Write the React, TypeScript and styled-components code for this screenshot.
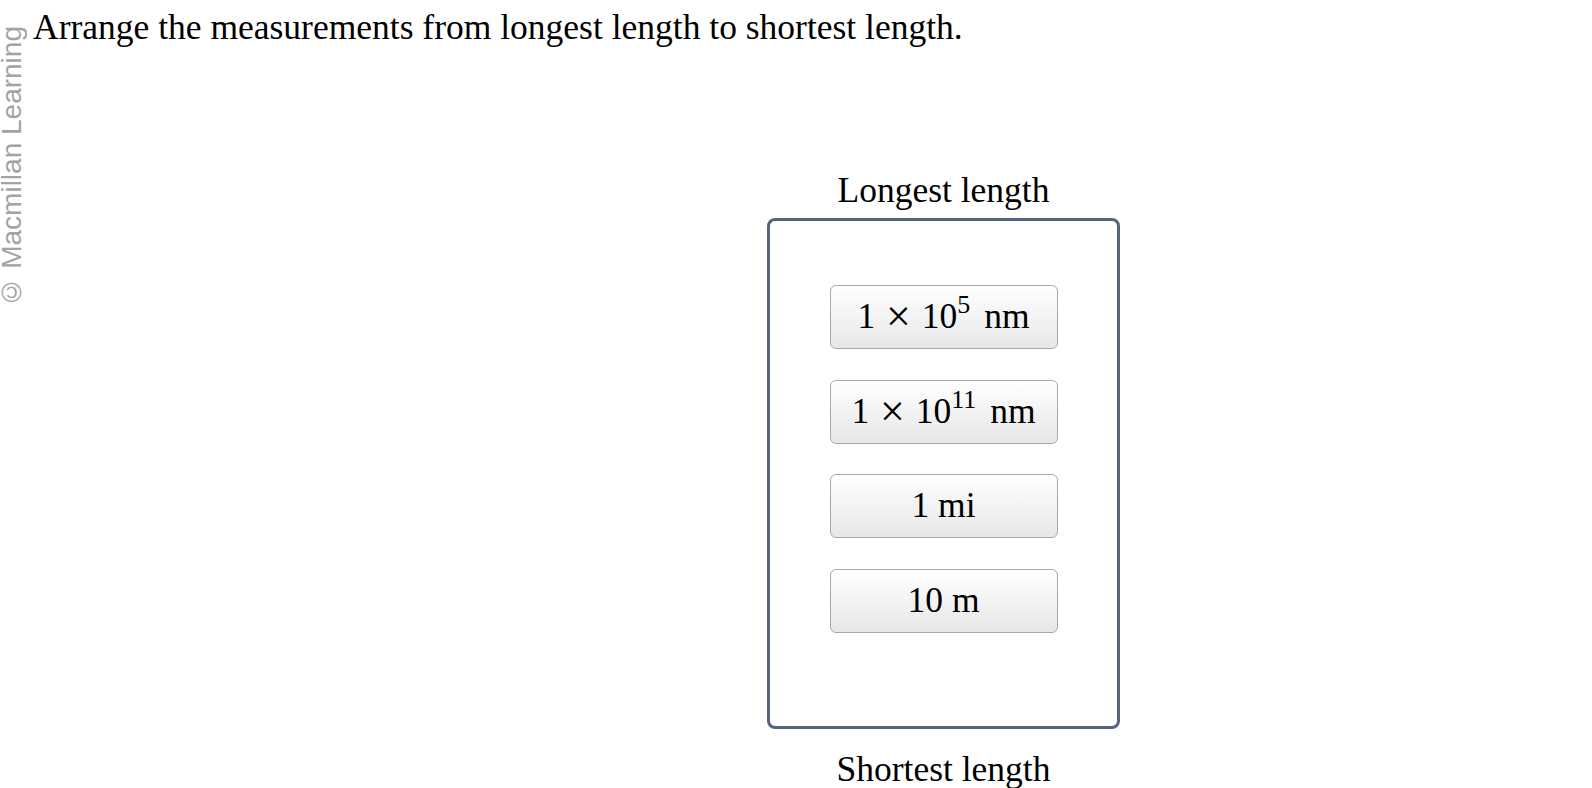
import { createGlobalStyle, styled } from 'styled-components';

const GlobalStyle = createGlobalStyle`
  html, body {
    margin: 0;
    padding: 0;
    background: #fff;
  }
  body {
    font-family: 'Liberation Serif', 'Times New Roman', serif;
    color: #000;
  }
`;

const Page = styled.div`
  display: flex;
  align-items: flex-start;
  gap: 9px;
  height: 788px;
  overflow: hidden;
`;

// copyright strip, reads bottom to top
const Watermark = styled.div`
  width: 24px;
  margin-top: 26px;
  font-family: 'Liberation Sans', Arial, sans-serif;
  font-size: 28px;
  line-height: 24px;
  color: #a3a3a3;
  writing-mode: vertical-rl;
  transform: rotate(180deg);
  white-space: nowrap;
`;

const Content = styled.div`
  flex: 1;
  padding-top: 8px;
`;

const Prompt = styled.div`
  font-size: 35.5px;
  line-height: 39px;
`;

const SortColumn = styled.div`
  width: 353px;
  margin-left: 734px;
  margin-top: 124px;
  display: flex;
  flex-direction: column;
`;

const ZoneLabel = styled.div<{ $gap: number }>`
  font-size: 35.5px;
  line-height: 39px;
  text-align: center;
  margin-top: ${(props) => props.$gap}px;
`;

const DropZone = styled.div`
  box-sizing: border-box;
  height: 511px;
  margin-top: 8px;
  padding-top: 64px;
  border: 3px solid #56657d;
  border-radius: 8px;
  display: flex;
  flex-direction: column;
  align-items: center;
  gap: 30.6px;
`;

const Tile = styled.div`
  box-sizing: border-box;
  width: 228px;
  height: 64px;
  border: 1.5px solid #a8a8a8;
  border-radius: 6px;
  background: linear-gradient(#ffffff, #e7e7e7);
  display: flex;
  align-items: center;
  justify-content: center;
  font-size: 35.5px;
  line-height: 1;
  white-space: pre;
  cursor: grab;
`;

const Times = styled.span`
  font-size: 44px;
  line-height: 0;
  padding: 0 2px;
`;

const Exponent = styled.span`
  font-size: 26px;
  line-height: 0;
  position: relative;
  top: -12px;
`;

const Unit = styled.span`
  margin-left: 5px;
`;

type Measurement = { mantissa: string; exp?: string; unit: string };

const tiles: Measurement[] = [
  { mantissa: '1', exp: '5', unit: 'nm' },
  { mantissa: '1', exp: '11', unit: 'nm' },
  { mantissa: '1', unit: 'mi' },
  { mantissa: '10', unit: 'm' },
];

function App() {
  return (
    <>
      <GlobalStyle />
      <Page>
        <Watermark>© Macmillan Learning</Watermark>
        <Content>
          <Prompt>Arrange the measurements from longest length to shortest length.</Prompt>
          <SortColumn>
            <ZoneLabel $gap={0}>Longest length</ZoneLabel>
            <DropZone>
              {tiles.map((t) =>
                t.exp ? (
                  <Tile key={t.mantissa + t.exp}>
                    {t.mantissa} <Times>×</Times> 10<Exponent>{t.exp}</Exponent>
                    <Unit> {t.unit}</Unit>
                  </Tile>
                ) : (
                  <Tile key={t.mantissa + t.unit}>{`${t.mantissa} ${t.unit}`}</Tile>
                )
              )}
            </DropZone>
            <ZoneLabel $gap={21}>Shortest length</ZoneLabel>
          </SortColumn>
        </Content>
      </Page>
    </>
  );
}

export default App;
